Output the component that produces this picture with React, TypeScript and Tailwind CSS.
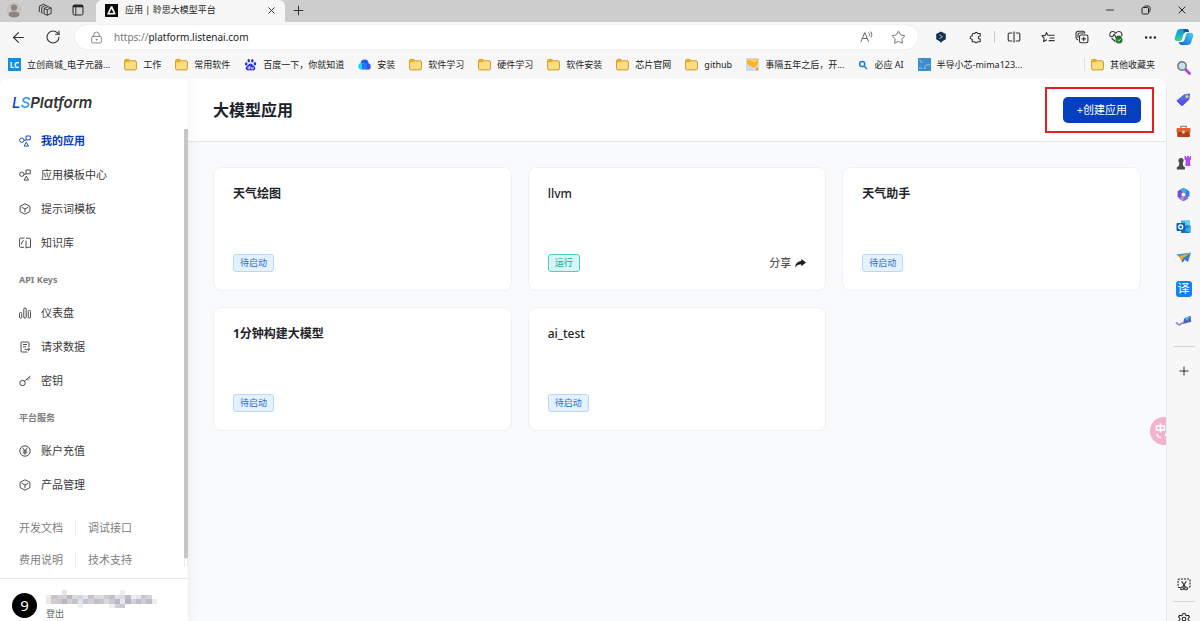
import React from 'react';
import {
  ArrowLeft,
  Plus,
  X,
  Minus,
  Star,
  Ellipsis,
  LockKeyhole,
  RotateCw,
  Settings,
} from 'lucide-react';

type IconProps = { className?: string };

/* ---------- browser chrome icons ---------- */

const Avatar = () => (
  <svg viewBox="0 0 18 18" className="size-[18px]">
    <circle cx="9" cy="9" r="8.5" fill="#c6c2be" stroke="#d9d6d3" />
    <circle cx="9" cy="6.6" r="3.1" fill="#8a8683" />
    <path d="M3.6 14.2c0-2.6 2-3.6 5.4-3.6s5.4 1 5.4 3.6C13 15.700 11 16.400 9 16.400s-4-.7-5.400-2.200z" fill="#8a8683" />
  </svg>
);

const Workspaces = () => (
  <svg viewBox="0 0 16 16" className="size-[14px]" fill="none" stroke="#333" strokeWidth="1.100" strokeLinejoin="round">
    <path d="M7 6.200l4.500-2 3.500 1.400v6.200L10.600 14 7 12.600z" />
    <path d="M7 6.200l3.600 1.500L15 5.600M10.600 7.700V14" />
    <path d="M4.300 11.600V4.900L9 2.700l2 .9M4.300 11.600l1 .4M1.500 9.900V3.700L6.300 1.400l1.900.8M1.500 9.900l1 .4" />
  </svg>
);

const TabMenu = () => (
  <svg viewBox="0 0 12 12" className="size-3" fill="none" stroke="#222">
    <rect x="1" y="1" width="10" height="10" rx="1.500" />
    <path d="M1 2.200h10" strokeWidth="2.200" />
    <path d="M3.800 3v8" strokeWidth=".9" />
  </svg>
);

const Favicon = () => (
  <svg viewBox="0 0 13 13" className="size-[13px]">
    <rect width="13" height="13" fill="#0b0b0b" />
    <path d="M5.800 2.300h1.500l3.500 7.900H9.200L6.500 4.800 4.400 9h4.200l.6 1.400H2z" fill="#fff" />
  </svg>
);

const Restore = () => (
  <svg viewBox="0 0 10 10" className="size-[10px]" fill="none" stroke="#222">
    <rect x="1" y="2.500" width="6.500" height="6.500" rx="1.200" />
    <path d="M2.800 2.400C3 1.400 3.600 1 4.500 1h2.700C8.400 1 9 1.700 9 2.800v2.700c0 .9-.5 1.500-1.300 1.700" />
  </svg>
);

const ReadAloud = () => (
  <svg viewBox="0 0 14 12" className="h-3 w-[14px]" fill="none" stroke="#6b6b6b" strokeWidth="1" strokeLinecap="round">
    <path d="M1 10.500L4.800 1.500l3.700 9M2.300 7.500h5M8.800 1.700c.9.900 1 2.200.4 3.200M10.700.8c1.400 1.500 1.500 3.700.5 5.200" />
  </svg>
);

const HexArrow = () => (
  <svg viewBox="0 0 12 12" className="size-3">
    <path d="M6 .4l4.800 2.700v5.200L7 10.500 6 12l-1-1.500L1.200 8.300V3.100z" fill="#16304d" />
    <path d="M4.300 3.900l3.200 1.800-3.200 2" fill="none" stroke="#9fc4dc" strokeWidth=".9" />
  </svg>
);

const Extension = () => (
  <svg viewBox="0 0 13 13" className="size-[13px]" fill="none" stroke="#333" strokeWidth="1.100" strokeLinejoin="round">
    <path d="M4 2.500h1.700a1.500 1.500 0 0 1 2.900 0h2.600v2.600a1.500 1.500 0 1 0 0 2.900v2.700H8.600a1.500 1.500 0 0 1-2.900 0H3.200V8.200a1.600 1.600 0 1 1 0-3.100V3.300z" />
  </svg>
);

const SplitScreen = () => (
  <svg viewBox="0 0 14 12" className="h-3 w-[14px]" fill="none" stroke="#333" strokeWidth="1.100">
    <path d="M5.300 2H2.500A1.300 1.300 0 0 0 1.200 3.300v5.400A1.300 1.300 0 0 0 2.500 10h2.800M8.700 2h2.800a1.300 1.300 0 0 1 1.300 1.300v5.400a1.300 1.300 0 0 1-1.300 1.300H8.700M7 .4v11.200" />
  </svg>
);

const Favorites = () => (
  <svg viewBox="0 0 14 13" className="h-[13px] w-[14px]" fill="none" stroke="#333" strokeWidth="1.100" strokeLinejoin="round" strokeLinecap="round">
    <path d="M8.600 4.300h4.600M9 7h4.200M8 9.600h5.200M8.200 4.300H6.800L5.500 1.500 4.100 4.400l-3.300.5 2.400 2.300-.6 3.300 3-1.600" />
  </svg>
);

const Collections = () => (
  <svg viewBox="0 0 14 14" className="size-[14px]" fill="none" stroke="#333" strokeWidth="1.100">
    <rect x="4.500" y="5" width="8.400" height="7.800" rx="1.500" />
    <path d="M8.700 6.800v4.200M6.600 8.900h4.200M3 9.900C1.700 9.500 1 8.700 1 7.500V3.700C1 2.200 2 1.200 3.500 1.200h4.200c1.200 0 2 .7 2.400 2" />
    <path d="M3 7.800V4.600C3 3.600 3.500 3 4.500 3h5" />
  </svg>
);

const Essentials = () => (
  <svg viewBox="0 0 14 14" className="size-[14px]">
    <path d="M1 6C.3 3.300 1.800 1.500 3.700 1.500c1.300 0 2.300.7 3.100 1.700.8-1 1.800-1.700 3.100-1.700 2.300 0 3.700 2.200 2.700 4.700M6.300 11.500L2.500 8M.8 6.500h3.100l1.300-2.400 2 4 1.200-1.700h3.500" fill="none" stroke="#333" strokeWidth="1.100" strokeLinejoin="round" />
    <circle cx="10" cy="10" r="3.500" fill="#1c7d20" />
    <path d="M8.400 10.100l1.200 1.100 2-2.200" fill="none" stroke="#d9f5d5" />
  </svg>
);

const Copilot = () => (
  <svg viewBox="0 0 20 18" className="h-[18px] w-5">
    <defs>
      <linearGradient id="cop-a" x1="0" y1="0" x2="0" y2="1">
        <stop offset="0" stopColor="#1a8fe0" />
        <stop offset=".5" stopColor="#16b7c7" />
        <stop offset="1" stopColor="#4fd27c" />
      </linearGradient>
      <linearGradient id="cop-b" x1="1" y1="0" x2="0" y2="1">
        <stop offset="0" stopColor="#4bd0f5" />
        <stop offset="1" stopColor="#1264d9" />
      </linearGradient>
    </defs>
    <path d="M6.500 1h6c1.700 0 2.100 1.200 2.600 3H12c-1.300 0-2 .7-2.400 2L8 11.300c-.4 1.300-1 1.900-2.300 1.900H3.500C.8 13.200.4 11 1 9l1.700-5C3.300 2.100 4.500 1 6.500 1z" fill="url(#cop-a)" />
    <path d="M9 1h3.500c1.700 0 2.100 1.200 2.600 3H12c-1.300 0-2 .7-2.400 2C10 4 10 2 9 1z" fill="#1256b0" />
    <path d="M13.500 17h-6c-1.700 0-2.100-1.200-2.600-3H8c1.300 0 2-.7 2.400-2L12 6.700c.4-1.300 1-1.900 2.300-1.900h2.200C19.200 4.800 19.600 7 19 9l-1.700 5c-.6 1.900-1.800 3-3.800 3z" fill="url(#cop-b)" />
  </svg>
);

/* ---------- bookmark icons ---------- */

const Folder = () => (
  <svg viewBox="0 0 13 13" className="size-[13px] shrink-0">
    <path d="M.6 2.500c0-.7.400-1.100 1.100-1.100h3l1.500 1.400h5c.7 0 1.200.5 1.200 1.200v6.800c0 .7-.5 1.100-1.200 1.100H1.700c-.7 0-1.100-.4-1.100-1.100z" fill="#fddc82" stroke="#c99c2d" />
    <path d="M1 4.300h3.600l1.500-1.200-1.400-1.300H1.500L1 2.300z" fill="#e8b021" />
  </svg>
);

const Lc = () => (
  <span className="flex size-[13px] shrink-0 items-center justify-center bg-[#0d8fe3] text-[8px] leading-none font-bold text-white">LC</span>
);

const Paw = () => (
  <svg viewBox="0 0 13 13" className="size-[13px] shrink-0" fill="#2932e1">
    <ellipse cx="2.200" cy="5.900" rx="1.300" ry="1.700" />
    <ellipse cx="4.800" cy="2.700" rx="1.300" ry="1.800" />
    <ellipse cx="8.300" cy="2.700" rx="1.300" ry="1.800" />
    <ellipse cx="10.900" cy="5.700" rx="1.300" ry="1.700" />
    <path d="M6.500 5.400c1.400 0 2 1.100 3 2.200 1.100 1.100 2 1.700 1.700 3.200-.3 1.500-1.600 1.800-4.700 1.500-3.100.3-4.400 0-4.700-1.500-.3-1.500.6-2.100 1.700-3.200 1-1.100 1.600-2.200 3-2.200z" />
    <path d="M5.800 8v2.800H4.500c-.8 0-1-1.700.1-1.700h1.200M7.300 8.900v1.900h1.800V8.900" fill="none" stroke="#fff" strokeWidth=".8" />
  </svg>
);

const Cloud = () => (
  <svg viewBox="0 0 13 13" className="size-[13px] shrink-0">
    <circle cx="6.600" cy="5.300" r="3.900" fill="#1d63f2" />
    <circle cx="3.600" cy="8.300" r="3.300" fill="#27d3ee" />
    <circle cx="9.500" cy="8.400" r="3.200" fill="#3a4df5" />
    <path d="M4 5.500h5v6H4z" fill="#1f7bf5" />
  </svg>
);

const Trophy = () => (
  <svg viewBox="0 0 13 13" className="size-[13px] shrink-0">
    <rect width="13" height="13" rx="1" fill="#cfd9ee" />
    <path d="M1 1.500h11.500L11 7.500 7.800 9.800 6.800 9.500 1 6z" fill="#fbb51f" />
    <path d="M1 1.500h11L9 4.500z" fill="#ffd25c" />
    <circle cx="11" cy="11" r="1.400" fill="#f5a511" />
  </svg>
);

const BlueSearch = () => (
  <svg viewBox="0 0 10 10" className="size-[10px] shrink-0" fill="none" stroke="#1f7fd6" strokeWidth="1.500">
    <circle cx="4.200" cy="4" r="2.600" />
    <path d="M6 6l3 3" />
  </svg>
);

const Chip = () => (
  <svg viewBox="0 0 13 13" className="size-[13px] shrink-0">
    <rect width="13" height="13" fill="#3c8dcb" />
    <path d="M2 1.500c0 2 .6 2.800 2.500 2.800M7 11c-.8-3.500 1-4.700 5-4.200M1 10.500c1-1 2.200-1 3 .5" fill="none" stroke="#b4d9f2" strokeWidth=".8" />
  </svg>
);

const bookmarks: { label: string; icon: () => React.ReactElement }[] = [
  { label: '立创商城_电子元器...', icon: Lc },
  { label: '工作', icon: Folder },
  { label: '常用软件', icon: Folder },
  { label: '百度一下，你就知道', icon: Paw },
  { label: '安装', icon: Cloud },
  { label: '软件学习', icon: Folder },
  { label: '硬件学习', icon: Folder },
  { label: '软件安装', icon: Folder },
  { label: '芯片官网', icon: Folder },
  { label: 'github', icon: Folder },
  { label: '事隔五年之后，开...', icon: Trophy },
  { label: '必应 AI', icon: BlueSearch },
  { label: '半导小芯-mima123...', icon: Chip },
];

/* ---------- right rail icons ---------- */

const railIcons: { name: string; art: React.ReactElement }[] = [
  {
    name: '搜索',
    art: (
      <>
        <path d="M9.500 9.500l4 4" stroke="#b03be8" strokeWidth="2.600" strokeLinecap="round" />
        <circle cx="6" cy="6" r="4.200" fill="#c6e2f2" stroke="#6c7378" strokeWidth="1.400" />
      </>
    ),
  },
  {
    name: '购物',
    art: (
      <>
        <path d="M8 2.400L13 1.500c.7 0 1 .4 1 1l-.6 4.700L6.800 13.500c-.5.5-1 .5-1.500 0L1 9.400c-.5-.5-.4-1 0-1.500z" fill="#4a70f0" />
        <path d="M1 9.300l5-1 7-1-6.200 6.200c-.5.500-1 .5-1.500 0z" fill="#5a4fe0" />
        <circle cx="11" cy="4.500" r="1.500" fill="#ffd45a" />
      </>
    ),
  },
  {
    name: '工具',
    art: (
      <>
        <path d="M4.800 4.500V2.400h5.400v2.100" fill="none" stroke="#8b8f92" strokeWidth="1.200" />
        <rect x=".5" y="4" width="14" height="4.500" rx="1" fill="#e2622e" />
        <rect x="1.200" y="8" width="12.600" height="5" rx=".8" fill="#b93c12" />
        <rect x="6.300" y="6.700" width="2.400" height="2.800" fill="#d8dadb" />
      </>
    ),
  },
  {
    name: '游戏',
    art: (
      <>
        <path d="M8.500 1H10v1.300h1V1h2v1.300h1V1h1v3.500l-1 1 .5 5.500H9.300l.4-5.500-1.200-1z" fill="#b34cf0" />
        <circle cx="5" cy="5.500" r="2.600" fill="#4a4a4a" />
        <path d="M3.600 7h2.900l.7 4 1.800 1.300V14.500H.8v-2.200L2.800 11z" fill="#4a4a4a" />
      </>
    ),
  },
  {
    name: 'Microsoft 365',
    art: (
      <g fill="none" strokeWidth="4" strokeLinejoin="round">
        <path d="M7.500 3L11.400 5.200v4.600" stroke="#2f7fd6" />
        <path d="M11.400 9.800L7.500 12 3.600 9.800" stroke="#7a6fe0" />
        <path d="M3.600 10.500V5.200L8 2.800" stroke="#7b4fc0" />
        <path d="M5.500 4.200L7.500 3l3 1.700" stroke="#3fa9ea" />
        <path d="M5 10.700l2.500 1.400" stroke="#b98bea" />
      </g>
    ),
  },
  {
    name: 'Outlook',
    art: (
      <>
        <path d="M5 1.500h9v5L5 8z" fill="#3ab2ee" />
        <path d="M9.500 1.500H14V6H9.500z" fill="#67d0f7" />
        <path d="M5 7l9.500-.5V13c0 .6-.3 1-1 1H5z" fill="#1479cc" />
        <path d="M14.500 6.500L8 11l6 3z" fill="#35abed" />
        <rect x=".5" y="4" width="8.500" height="8" rx="1" fill="#0f62b5" />
        <circle cx="4.700" cy="8" r="2" fill="none" stroke="#fff" strokeWidth="1.300" />
      </>
    ),
  },
  {
    name: '发送',
    art: (
      <>
        <path d="M0 4.500l15-2L5.500 8.500z" fill="#3b9be8" />
        <path d="M3 6.500L15 2.500 6 9l-.5 3z" fill="#f6a623" />
        <path d="M15 2.500L6.500 8.500 12 12z" fill="#2f7fd6" />
        <path d="M6.500 8.500L6 12.800l2.500-2.500z" fill="#1b4f98" />
      </>
    ),
  },
];

const ScissorsClip = () => (
  <svg viewBox="0 0 14 13" className="h-[13px] w-[14px]" fill="none" stroke="#222" strokeWidth="1.100">
    <path d="M3 9.500H2.200C1.500 9.500 1 9 1 8.300V2.200C1 1.500 1.500 1 2.200 1h9.600c.7 0 1.200.5 1.200 1.200v6.100c0 .7-.5 1.200-1.200 1.200H11" strokeDasharray="2 1" />
    <path d="M4.700 3.200L8.300 9M9.300 3.200L5.700 9" />
    <circle cx="5" cy="10.400" r="1.400" />
    <circle cx="9" cy="10.400" r="1.400" />
  </svg>
);

/* ---------- sidebar icons ---------- */

const svgBase = 'size-3 shrink-0';

const Shapes = ({ className = '' }: IconProps) => (
  <svg viewBox="0 0 12 12" className={`${svgBase} ${className}`} fill="none" stroke="currentColor" strokeWidth=".9" strokeLinejoin="round">
    <circle cx="2.800" cy="5.200" r="2.200" />
    <path d="M7 1h4.300v3.800H7zM7.300 7.200l2.200 3.900H5.100zM5 5.200h2" />
  </svg>
);

const Cube = ({ className = '' }: IconProps) => (
  <svg viewBox="0 0 12 12" className={`${svgBase} ${className}`} fill="none" stroke="currentColor" strokeWidth=".9" strokeLinejoin="round">
    <path d="M6 .8l4.900 2.500v5.300L6 11.200 1.100 8.600V3.300zM2.700 4.200L6 6l3.300-1.800M6 6v3.300" />
  </svg>
);

const Book = ({ className = '' }: IconProps) => (
  <svg viewBox="0 0 12 12" className={`${svgBase} ${className}`} fill="none" stroke="currentColor" strokeWidth=".9" strokeLinejoin="round">
    <path d="M5 10.300H1.500c-.5 0-.9-.4-.9-.9V2c0-.5.400-.9.900-.9h4M7 1.200h3.500c.6 0 1 .4 1 .9v8.200H8l-1 .9V3.500M4.800 3.200L3 5l-.5 2.500" />
  </svg>
);

const Bars = ({ className = '' }: IconProps) => (
  <svg viewBox="0 0 12 12" className={`${svgBase} ${className}`} fill="none" stroke="currentColor" strokeWidth=".9">
    <rect x=".5" y="5.500" width="2.300" height="5.500" rx="1" />
    <rect x="4.800" y="1" width="2.400" height="10" rx="1" />
    <rect x="9.200" y="3.500" width="2.300" height="7.500" rx="1" />
  </svg>
);

const DocArrow = ({ className = '' }: IconProps) => (
  <svg viewBox="0 0 12 12" className={`${svgBase} ${className}`} fill="none" stroke="currentColor" strokeWidth=".9" strokeLinejoin="round">
    <path d="M10 6V2c0-.6-.4-1-1-1H3c-.6 0-1 .4-1 1v8c0 .6.400 1 1 1h5.500M4 3.500h4M4 5.800h3M5.500 8.300h5.200M9.200 6.800l1.600 1.500-1.600 1.500" />
  </svg>
);

const Key = ({ className = '' }: IconProps) => (
  <svg viewBox="0 0 12 12" className={`${svgBase} ${className}`} fill="none" stroke="currentColor" strokeWidth=".9">
    <circle cx="3.500" cy="8" r="2.700" />
    <path d="M5.500 6.100L11.500 1M8.300 3.800l1.400 1.600M10 2.400l1.200 1.300" />
  </svg>
);

const Yen = ({ className = '' }: IconProps) => (
  <svg viewBox="0 0 12 12" className={`${svgBase} ${className}`} fill="none" stroke="currentColor" strokeWidth=".9">
    <circle cx="6" cy="6" r="5.200" />
    <path d="M3.700 2.800L6 5.700l2.300-2.900M6 5.700v4M3.700 6h4.600M3.700 7.900h4.600" />
  </svg>
);

const ShareArrow = () => (
  <svg viewBox="0 0 11 9" className="h-[9px] w-[11px]" fill="#1b1b1b">
    <path d="M6.300 0L11 3.600 6.300 7.200V5.200C3.500 5.200 1.600 6 .2 8.600.3 5 2.500 2.300 6.300 2z" />
  </svg>
);

type NavItem = { label: string; icon: (p: IconProps) => React.ReactElement; active?: boolean };
const navGroups: { heading?: string; items: NavItem[] }[] = [
  {
    items: [
      { label: '我的应用', icon: Shapes, active: true },
      { label: '应用模板中心', icon: Shapes },
      { label: '提示词模板', icon: Cube },
      { label: '知识库', icon: Book },
    ],
  },
  {
    heading: 'API Keys',
    items: [
      { label: '仪表盘', icon: Bars },
      { label: '请求数据', icon: DocArrow },
      { label: '密钥', icon: Key },
    ],
  },
  {
    heading: '平台服务',
    items: [
      { label: '账户充值', icon: Yen },
      { label: '产品管理', icon: Cube },
    ],
  },
];

const apps = [
  { name: '天气绘图', running: false },
  { name: 'llvm', running: true },
  { name: '天气助手', running: false },
  { name: '1分钟构建大模型', running: false },
  { name: 'ai_test', running: false },
];

const mosaic = [
  ['', '', '', '#e6e6ea', '', '', '', '', '', '', '', '', '', '', '#eeeef2', '', '', '', '', '', ''],
  ['#f4ebe8', '#c4c4ca', '#cfcfd6', '#d6d2d0', '#b9b9c3', '#dcd8dc', '#ccd8e6', '#e4e2e6', '#c9c5cf', '#d8dbe2', '#dfdcdf', '#cfcbd4', '#c0c1d0', '#e0e0e6', '#dcdce2', '#bdbdc9', '#f0eef2', '#e4e6ea', '#c6c6cf', '#d6d4dc', ''],
  ['#f0e6e4', '#d2cdd0', '#c7c7cd', '#b8b6bd', '#d8cdd0', '#c3c5cb', '#dfe3ea', '#c9c3cc', '#d6cfcf', '#bfbfc9', '#c8c6ce', '#dcd9de', '#c9c9d4', '#b9b8c8', '#e6e6ee', '#b5b3c4', '#cdd2dc', '#bebdc8', '#d0cdd6', '#bdbcc9', '#ecebf0'],
  ['', '', '', '', '', '', '#efeff3', '', '', '', '', '', '#f0f0f4', '#d2cfdc', '#c9c7d2', '', '', '', '', '', ''],
];

function TabStrip() {
  return (
    <header className="flex h-[22px] shrink-0 items-stretch bg-[#cdcdcd] pb-[2px]">
      <div className="flex w-24 items-center">
        <button aria-label="个人资料" className="ml-[5px]"><Avatar /></button>
        <button aria-label="工作区" className="ml-[15px]"><Workspaces /></button>
        <button aria-label="标签操作" className="ml-5"><TabMenu /></button>
      </div>
      <div className="-mb-[3px] flex w-[189px] items-center rounded-t-md bg-[#f7f7f7] pr-2 pb-[3px] pl-[9px]">
        <Favicon />
        <span className="ml-[7px] flex-1 text-[9px] text-[#222]">应用 | 聆思大模型平台</span>
        <button aria-label="关闭标签"><X className="size-[11px] text-[#222]" strokeWidth={2} /></button>
      </div>
      <button aria-label="新建标签" className="ml-[6px]"><Plus className="size-[15px] text-[#333]" strokeWidth={1.6} /></button>
      <div className="ml-auto flex items-center">
        <button aria-label="最小化" className="flex w-9 justify-center"><Minus className="size-3 text-[#222]" strokeWidth={1.8} /></button>
        <button aria-label="还原" className="flex w-9 justify-center"><Restore /></button>
        <button aria-label="关闭" className="flex w-9 justify-center"><X className="size-3 text-[#222]" strokeWidth={2} /></button>
      </div>
    </header>
  );
}

function Toolbar() {
  return (
    <div className="flex h-[30px] shrink-0 items-center">
      <button aria-label="后退" className="ml-[10px]"><ArrowLeft className="size-[17px] text-[#333]" strokeWidth={1.5} /></button>
      <button aria-label="刷新" className="ml-[18px]"><RotateCw className="size-4 text-[#333]" strokeWidth={1.6} /></button>
      <div className="mr-[6px] ml-[14px] flex h-6 flex-1 items-center rounded-full bg-white pr-[12px] pl-[15px] shadow-[0_0_2px_#0000001a]">
        <LockKeyhole className="size-[13px] text-[#777]" strokeWidth={1.6} />
        <label htmlFor="url" className="ml-[11px] text-[10px] text-[#777]">https://</label>
        <input id="url" defaultValue="platform.listenai.com" className="min-w-0 flex-1 bg-transparent text-[10px] text-[#1b1b1b] outline-none" />
        <button aria-label="朗读"><ReadAloud /></button>
        <button aria-label="收藏此页" className="ml-[17px]"><Star className="size-[15px] text-[#666]" strokeWidth={1.5} /></button>
      </div>
      <button aria-label="扩展" className="flex w-[34px] justify-center"><HexArrow /></button>
      <button aria-label="扩展菜单" className="flex w-[34px] justify-center"><Extension /></button>
      <span className="mx-[2px] h-3 w-px bg-[#c8c8c8]" />
      <button aria-label="分屏" className="flex w-[34px] justify-center"><SplitScreen /></button>
      <button aria-label="收藏夹" className="flex w-[34px] justify-center"><Favorites /></button>
      <button aria-label="集锦" className="flex w-[34px] justify-center"><Collections /></button>
      <button aria-label="浏览器概要" className="flex w-[34px] justify-center"><Essentials /></button>
      <button aria-label="更多" className="flex w-[34px] justify-center"><Ellipsis className="size-[15px] text-[#222]" /></button>
      <button aria-label="Copilot" className="flex w-[33px] justify-center"><Copilot /></button>
    </div>
  );
}

function Bookmarks() {
  return (
    <nav className="flex h-[27px] shrink-0 items-center gap-[14px] pb-[2px] pl-2 text-[9px] whitespace-nowrap text-[#222]">
      {bookmarks.map(({ label, icon: Icon }) => (
        <a key={label} href="#" className="flex items-center gap-[6px]">
          <Icon />
          {label}
        </a>
      ))}
      <a href="#" className="mr-3 ml-auto flex items-center gap-[6px] border-l border-[#dedede] pl-[6px]">
        <Folder />
        其他收藏夹
      </a>
    </nav>
  );
}

function Rail() {
  return (
    <aside className="flex w-[33px] shrink-0 flex-col items-center">
      <div className="grid h-[285px] shrink-0 grid-rows-9 place-items-center">
        {railIcons.map(({ name, art }) => (
          <button key={name} aria-label={name}>
            <svg viewBox="0 0 15 15" className="size-[15px]" fill="none">{art}</svg>
          </button>
        ))}
        <button className="flex size-4 items-center justify-center rounded-[3px] bg-[#1283f5] text-[12px] leading-none text-white">译</button>
        <button aria-label="绘图">
          <svg viewBox="0 0 17 12" className="h-3 w-[17px]">
            <path d="M1 8.500c1-2 2 2 3.500 1.500S6 7 8 8.500" fill="none" stroke="#8a6cc0" strokeWidth="1.400" />
            <path d="M9 3.500l6.500-2.700.8 6L8 9z" fill="#4b66b5" />
            <path d="M9 3.500l6.500-2.700-3 4.700z" fill="#44b4e0" />
          </svg>
        </button>
      </div>
      <hr className="mt-[9px] w-[22px] border-[#d4d4d4]" />
      <button aria-label="自定义边栏" className="mt-[17px]"><Plus className="size-[14px] text-[#222]" strokeWidth={1.6} /></button>
      <button aria-label="网页捕获" className="mt-auto"><ScissorsClip /></button>
      <hr className="mt-[10px] w-[22px] border-[#d4d4d4]" />
      <button aria-label="设置" className="mt-[10px] -mb-[5px]"><Settings className="size-[14px] text-[#222]" strokeWidth={1.8} /></button>
    </aside>
  );
}

function Sidebar() {
  return (
    <aside className="z-10 flex w-[188px] shrink-0 flex-col bg-white shadow-[2px_0_10px_#0000000f]">
      <div className="flex h-[45px] shrink-0 items-center pt-1 pl-3 font-['Inter','Noto_Sans',sans-serif] text-[15px] font-semibold text-[#333] italic">
        <span className="font-medium text-[#0b3fd0]">L</span>
        <span className="font-medium text-[#2d9bf5]">S</span>
        <span>Platform</span>
      </div>
      <div className="flex min-h-0 flex-1">
        <nav className="flex-1 pl-[19px] text-[11px] text-[#3a3a3a]">
          {navGroups.map((group, i) => (
            <section key={i}>
              {group.heading && (
                <h2 className="flex h-9 items-center pt-1 text-[9px] font-bold text-[#7d7d7d]">{group.heading}</h2>
              )}
              {group.items.map(({ label, icon: Icon, active }) => (
                <a key={label} href="#" className={`flex h-[34px] items-center gap-[10px] ${active ? 'font-bold text-[#0a3cbe]' : ''}`}>
                  <Icon />
                  {label}
                </a>
              ))}
            </section>
          ))}
          <div className="grid grid-cols-[57px_1fr] pt-[10px] text-[#808080]">
            {['开发文档', '调试接口', '费用说明', '技术支持'].map((label, i) => (
              <a key={label} href="#" className={`flex h-8 items-center ${i % 2 ? 'pl-3' : ''}`}>
                <span className={i % 2 ? '' : 'flex-1 border-r border-[#efefef]'}>{label}</span>
              </a>
            ))}
          </div>
        </nav>
        <div className="flex w-1 flex-col pt-[5px] pb-3">
          <div className="flex-1 bg-[#c6c6c6]" />
          <div className="h-2 border border-[#eaeaea]" />
        </div>
      </div>
      <div className="flex h-[43px] shrink-0 items-start gap-[9px] border-t border-[#e8e8e8] pt-[11px] pl-3">
        <span className="mt-[3px] flex size-[25px] items-center justify-center rounded-full bg-black text-[15px] leading-none text-white">9</span>
        <div className="flex flex-col">
          <svg viewBox="0 0 105 20" className="h-[18px] w-[111px]" preserveAspectRatio="none" shapeRendering="crispEdges">
            {mosaic.map((row, y) => row.map((c, x) => c && <rect key={`${x}-${y}`} x={x * 5} y={y * 5} width="5" height="5" fill={c} />))}
          </svg>
          <button className="text-left text-[9px] leading-[12px] text-[#666]">登出</button>
        </div>
      </div>
    </aside>
  );
}

function AppCard({ name, running }: { name: string; running: boolean }) {
  const latinOnly = /^[\w\s-]+$/.test(name);
  return (
    <article className="flex h-[124px] flex-col justify-between rounded-lg border border-[#f0f1f3] bg-white px-[19px] pt-4 pb-[18px]">
      <h2 className={`text-[12px] leading-5 text-[#1f2328] ${latinOnly ? 'font-medium' : 'font-bold'}`}>{name}</h2>
      <div className="flex items-center justify-between">
        <span className={`rounded-[3px] border px-[6px] text-[9px] leading-4 ${running ? 'border-[#4fcfc4] bg-[#d5f6f4] text-[#14a89b]' : 'border-[#b5d8fb] bg-[#e4f2ff] text-[#2f6be0]'}`}>
          {running ? '运行' : '待启动'}
        </span>
        {running && (
          <button className="flex items-center gap-1 text-[11px] leading-4 text-[#333]">
            分享 <ShareArrow />
          </button>
        )}
      </div>
    </article>
  );
}

export default function App() {
  return (
    <div className="flex h-screen flex-col overflow-hidden bg-[#f7f7f7] font-['Noto_Sans','Noto_Sans_CJK_SC',sans-serif]">
      <TabStrip />
      <Toolbar />
      <div className="flex min-h-0 flex-1">
        <div className="flex min-w-0 flex-1 flex-col">
          <Bookmarks />
          <div className="relative flex min-h-0 flex-1 overflow-hidden rounded-t-lg border-r border-[#e8eaec] bg-white">
            <Sidebar />
            <main className="flex min-w-0 flex-1 flex-col bg-[#f9fafc]">
              <div className="flex h-[63px] shrink-0 items-center justify-between border-b border-[#e4e6e9] bg-white pr-3 pl-[25px]">
                <h1 className="text-[16px] font-bold text-[#1c222b]">大模型应用</h1>
                <div className="border-2 border-[#e91c24] py-2 pr-[11px] pl-4">
                  <button className="flex h-[26px] items-center rounded-[5px] bg-[#063fbe] px-[14px] text-[11px] text-white">+创建应用</button>
                </div>
              </div>
              <div className="grid grid-cols-3 gap-4 p-[25px]">
                {apps.map((app) => <AppCard key={app.name} {...app} />)}
              </div>
            </main>
            <button className="absolute top-[338px] -right-3 flex size-7 items-center justify-center rounded-full bg-[#f3b3cd] pr-px" aria-label="翻译">
              <svg viewBox="0 0 18 18" className="size-[18px]" fill="none" stroke="#fff" strokeWidth="1.600">
                <path d="M1.500 4h8v4h-8zM5.500 1.500v9M2 12c.3 2.500 1.500 3.600 4 3.600M14 2l-3.500 12M12 9h5" />
              </svg>
            </button>
          </div>
        </div>
        <Rail />
      </div>
    </div>
  );
}
